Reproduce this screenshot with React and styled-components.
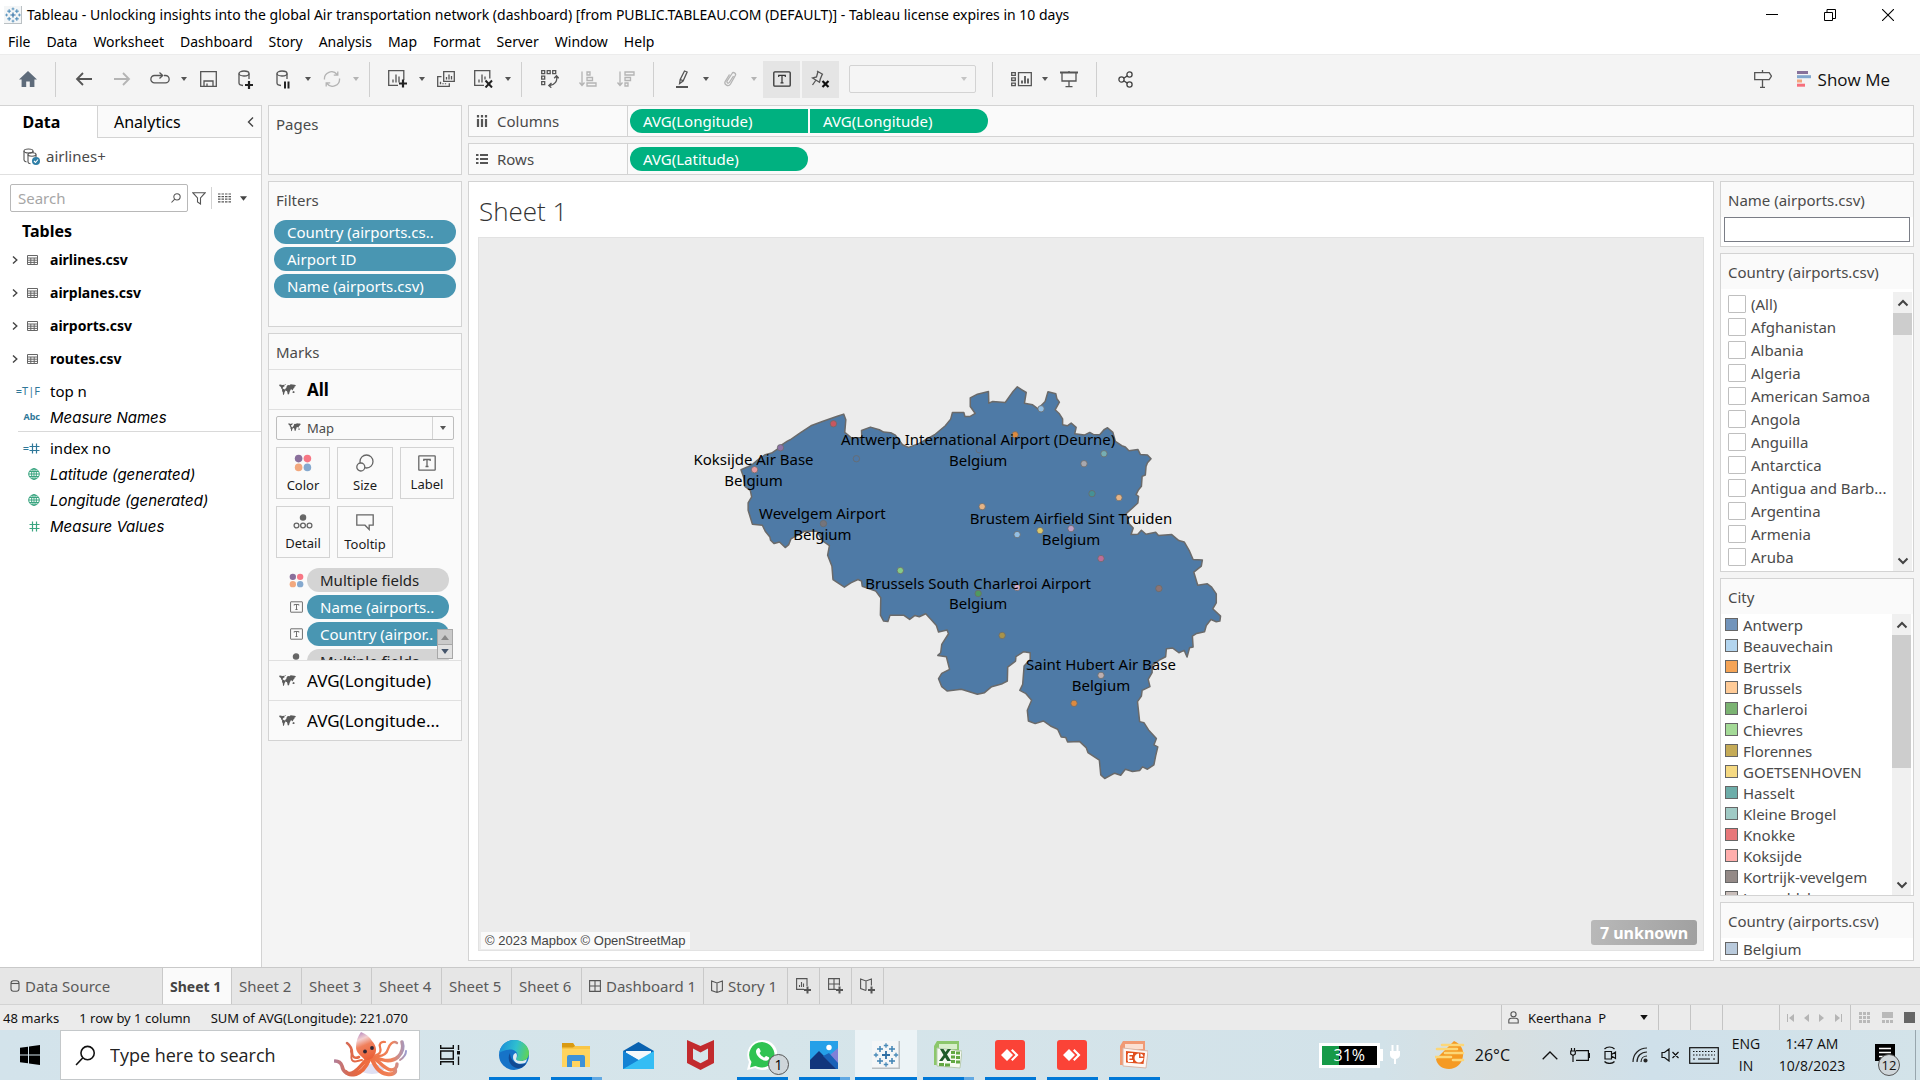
import React from "react";
import styled, { createGlobalStyle, css } from "styled-components";

const ui = `"Noto Sans", "Open Sans", sans-serif`;
const slanted = `Inter, "Noto Sans", sans-serif`;
const line = "#d3d3d3";
const ink = "#4a4a4a";

const Global = createGlobalStyle`
  *, *::before, *::after { box-sizing: border-box; }
  body { margin: 0; font-family: ${ui}; font-size: 14px; color: #000; background: #f4f4f4; }
  button, input, select { font: inherit; color: inherit; margin: 0; }
  button { padding: 0; border: 0; background: none; display: inline-flex; align-items: center; justify-content: center; }
  svg { display: block; flex: none; }
  ul { list-style: none; margin: 0; padding: 0; }
  h1, h2, h3 { margin: 0; font-weight: 400; }
`;

/* ---------- frame ---------- */
const Window = styled.div`
  height: 100vh; display: flex; flex-direction: column; overflow: hidden;
`;
const TitleBar = styled.header`
  height: 30px; flex: none; background: #fff; display: flex; align-items: center; padding: 0 3px 0 4px; line-height: 20px;
`;
const TitleText = styled.span`flex: 1; white-space: nowrap; padding-left: 5px;`;
const WinButton = styled.button`width: 58px; height: 28px;`;
const MenuBar = styled.nav`
  height: 24px; flex: none; background: #fff; display: flex; align-items: center; padding-left: 8px; gap: 16px;
`;
const MenuItem = styled.button`line-height: 20px;`;

/* ---------- toolbar ---------- */
const Toolbar = styled.div`
  height: 51px; flex: none; display: flex; align-items: center; padding: 0 30px 2px 9px; border-top: 1px solid #ececec;
`;
const Tool = styled.button`
  width: 38px; height: 37px; opacity: ${p => (p.$dim ? 0.4 : 1)};
`;
const ToggleTool = styled(Tool)`background: #e5e5e5; width: 37px; margin-right: 2px;`;
const CaretButton = styled.button`width: 10px; height: 37px; opacity: ${p => (p.$dim ? 0.4 : 1)};`;
const Divider = styled.span`width: 1px; height: 35px; margin: 0 9px 0 8px; background: #cfcfcf;`;
const Toggles = styled.div`display: flex; margin: 0 8px 0 4px;`;
const FitBox = styled.div`position: relative; display: flex; margin-right: 8px;`;
const FitSelect = styled.select`
  width: 127px; height: 28px; border: 1px solid ${line}; border-radius: 2px; background: #f5f5f5; appearance: none; opacity: 1;
`;
const OverCaret = styled.span`position: absolute; right: 8px; top: 0; bottom: 0; display: flex; align-items: center; pointer-events: none;`;
const Spacer = styled.span`flex: 1;`;
const ShowMe = styled.button`font-size: 17px; font-family: "Open Sans", sans-serif; gap: 7px; margin-left: 15px; color: #111;`;

/* ---------- body ---------- */
const Body = styled.main`flex: 1; min-height: 0; display: flex;`;
const DataPane = styled.aside`width: 262px; flex: none; background: #fff; border-right: 1px solid ${line};`;
const PaneTabs = styled.div`display: flex; height: 33px;`;
const PaneTab = styled.button`
  font-size: 16px; border-top: 1px solid ${line};
  ${p => p.$on ? css`width: 97px; font-weight: 700; padding-right: 14px;` : css`
    flex: 1; justify-content: flex-start; padding: 0 7px 0 16px; background: #fafafa; border-left: 1px solid ${line}; border-bottom: 1px solid ${line};`}
  span { flex: 1; text-align: left; }
`;
const Source = styled.div`
  height: 37px; display: flex; align-items: center; gap: 6px; padding-left: 23px; color: ${ink}; font-size: 15px; border-bottom: 1px solid #e0e0e0;
`;
const SearchRow = styled.div`display: flex; align-items: center; margin: 9px 0 0 10px; gap: 4px;`;
const SearchBox = styled.label`
  display: flex; align-items: center; width: 178px; height: 28px; border: 1px solid #b8b8b8; border-radius: 2px; padding: 0 6px 0 7px;
  input { border: 0; outline: 0; width: 100%; min-width: 0; padding: 0; background: none; font-size: 15px; }
  input::placeholder { color: #a6a6a6; opacity: 1; }
`;
const ViewTools = styled.div`
  display: flex; align-items: center; gap: 9px; height: 22px; margin-left: 1px; padding-left: 6px; border-left: 1px solid ${line};
`;
const TablesTitle = styled.h2`font-size: 16px; font-weight: 700; line-height: 22px; margin: 8px 0 1px 22px;`;
const TableRow = styled.li`
  display: flex; align-items: center; height: 33px; padding-left: 12px; font-weight: 700; font-size: 14px;
  svg + svg { margin: 0 12px 0 9px; }
`;
const Fields = styled.ul`
  padding: 3px 0 1px 0; margin-left: 18px; border-bottom: ${p => (p.$rule ? "1px solid #d9d9d9" : "0")};
`;
const Field = styled.li`
  display: grid; grid-template-columns: 32px 1fr; align-items: center; height: 26px; font-size: 15px;
  ${p => p.$i && css`font-style: italic; font-family: ${slanted};`}
`;
const TypeMark = styled.span`
  font-family: ${ui}; font-style: normal; font-size: ${p => (p.$s || 11)}px; font-weight: ${p => (p.$b ? 700 : 400)}; color: #2f7799; display: flex; align-items: center; justify-content: flex-end; padding-right: 10px; line-height: 16px; white-space: nowrap;
`;

const Shelves = styled.section`width: 194px; flex: none; margin-left: 6px; display: flex; flex-direction: column; gap: 6px;`;
const Card = styled.section`
  border: 1px solid ${line}; background: #fafafa; height: ${p => (p.$h ? p.$h + "px" : "auto")};
  flex: ${p => (p.$grow ? "1 1 0" : "none")}; min-height: 0; display: flex; flex-direction: column; overflow: hidden;
`;
const CardTitle = styled.h3`
  height: 35px; flex: none; padding: 0 7px; display: flex; align-items: center; color: ${ink}; font-size: 15px;
`;
const PillStack = styled.ul`display: flex; flex-direction: column; gap: 3px; padding: 3px 5px 0;`;
const Pill = styled.button`
  height: 24px; width: ${p => (p.$w ? p.$w + "px" : "100%")}; justify-content: flex-start; padding: 0 13px; font-size: 15px; white-space: nowrap; overflow: hidden; flex: none;
  background: ${p => p.$bg || "#4996b2"}; color: ${p => p.$fg || "#fff"}; border-radius: ${p => p.$r || "12px"};
`;
const SecondPill = styled(Pill)`margin-left: 2px;`;
const MarksRow = styled.button`
  height: 40px; flex: none; width: 100%; justify-content: flex-start; gap: 11px; padding-left: 10px; font-size: 17px; border-top: 1px solid #e0e0e0; font-weight: ${p => (p.$on ? 700 : 400)};
`;
const MarksBody = styled.div`height: 251px; border-top: 1px solid #e0e0e0; padding: 6px 7px 0; position: relative; overflow: hidden;`;
const MarkType = styled.div`
  position: relative; display: flex;
  select { width: 100%; height: 24px; border: 1px solid #bdbdbd; border-radius: 2px; appearance: none; background: #fafafa; padding: 0 0 0 30px; color: ${ink}; font-size: 13px; }
`;
const MarkTypeIcon = styled.span`position: absolute; left: 12px; top: 7px;`;
const MarkTypeCaret = styled.span`
  position: absolute; right: 1px; top: 1px; bottom: 1px; width: 21px; border-left: 1px solid ${line}; display: flex; align-items: center; justify-content: center; pointer-events: none;
`;
const MarkGrid = styled.div`display: grid; grid-template-columns: 54px 56px 54px; gap: 7px; margin-top: 7px;`;
const MarkButton = styled.button`
  height: 52px; border: 1px solid ${line}; flex-direction: column; font-size: 13px; line-height: 18px; gap: 4px; padding-top: 2px; color: #1a1a1a;
`;
const MarkPills = styled.ul`display: flex; flex-direction: column; gap: 3px; padding: 10px 0 0 9px;`;
const MarkPill = styled.li`
  display: grid; grid-template-columns: 22px auto; justify-content: start; align-items: center;
  svg { justify-self: center; }
`;
const Spinner = styled.div`
  position: absolute; right: 8px; bottom: 1px; display: flex; flex-direction: column;
  button { width: 16px; height: 15px; border: 1px solid #a8a8a8; background: #e1e1e1; }
  button:first-child { background: #cacaca; border-bottom: 0; }
`;

const Right = styled.div`flex: 1; min-width: 0; margin: 0 6px 6px 6px; display: flex; flex-direction: column; gap: 6px;`;
const Shelf = styled.div`height: 32px; flex: none; border: 1px solid ${line}; background: #fafafa; display: flex; align-items: center;`;
const ShelfLabel = styled.div`
  width: 159px; height: 100%; display: flex; align-items: center; gap: 9px; padding-left: 7px; border-right: 1px solid ${line}; margin-right: 2px; color: ${ink}; font-size: 15px;
`;
const Work = styled.div`flex: 1; min-height: 0; display: flex; gap: 6px;`;
const View = styled.section`flex: 1; min-width: 0; border: 1px solid ${line}; background: #fff; padding: 0 9px 9px; display: flex; flex-direction: column;`;
const SheetTitle = styled.h1`height: 55px; flex: none; display: flex; align-items: center; font-family: "Open Sans", sans-serif; font-size: 26px; font-weight: 300; color: #333; padding: 2px 0 0 1px;`;
const MapArea = styled.div`flex: 1; min-height: 0; background: #ececec; border: 1px solid #e2e2e2; position: relative; overflow: hidden;
  > svg { width: 100%; height: 100%; }
`;
const Credit = styled.p`
  position: absolute; left: 2px; bottom: 1px; margin: 0; padding: 0 4px; font: 13px/17px "Liberation Sans", Arial, sans-serif; background: rgba(255,255,255,.75); color: #444;
`;
const Unknown = styled.button`
  position: absolute; right: 6px; bottom: 5px; width: 106px; height: 25px; border-radius: 3px; background: linear-gradient(100deg, #b9b9b9, #a0a0a0); color: #fff; font-weight: 700; font-size: 16px;
`;
const Side = styled.aside`width: 194px; flex: none; display: flex; flex-direction: column; gap: 6px;`;
const SideBody = styled.div`background: #fff; flex: 1; min-height: 0; display: flex; overflow: hidden;`;
const NameInput = styled.input`
  width: 100%; margin: 0 3px 4px; height: 25px; border: 1px solid #7a7d86; background: #fff; padding: 0 4px;
`;
const CheckList = styled.ul`flex: 1; min-width: 0; padding: 3px 0 0 7px; color: ${ink};`;
const CheckRow = styled.label`
  display: flex; align-items: center; gap: 5px; height: 23px; font-size: 15px; white-space: nowrap;
  input { appearance: none; width: 18px; height: 18px; border: 1px solid #bfbfbf; border-radius: 1px; background: #fff; flex: none; }
`;
const LegendList = styled.ul`flex: 1; min-width: 0; padding: 0 0 0 4px; color: #4a4a4a;`;
const LegendRow = styled.li`display: flex; align-items: center; gap: 5px; height: 21px; font-size: 15px; white-space: nowrap;`;
const Swatch = styled.span`width: 13px; height: 13px; border: 1px solid #666; background: ${p => p.$c}; flex: none;`;
const Scroll = styled.div`
  width: 19px; flex: none; background: #f0f0f0; display: flex; flex-direction: column; margin: ${p => p.$m || "0"};
  button { height: 21px; width: 100%; flex: none; }
  button:last-child { margin-top: auto; }
`;
const Thumb = styled.span`height: ${p => p.$h}px; background: #cdcdcd;`;

/* ---------- sheet tabs / status ---------- */
const SheetBar = styled.nav`height: 38px; flex: none; display: flex; background: #e6e6e6; border-top: 1px solid #c9c9c9; border-bottom: 1px solid ${line};`;
const SheetTab = styled.button`
  width: ${p => p.$w}px; border-right: 1px solid #c9c9c9; padding: 0 0 0 ${p => (p.$plain ? 0 : 7)}px; gap: 5px; font-size: 15px; color: #5a5a5a; white-space: nowrap;
  justify-content: ${p => (p.$plain ? "center" : "flex-start")};
  ${p => p.$on && css`background: #fafafa; font-weight: 700; color: #444; font-size: 14px;`}
`;
const SourceTab = styled(SheetTab)`padding-left: 10px;`;
const Status = styled.footer`height: 25px; flex: none; background: #ebebeb; display: flex; align-items: center; padding: 0 5px 0 3px; gap: 20px; font-size: 13px; color: #111;`;
const StatusRight = styled.div`margin-left: auto; display: flex; height: 100%;`;
const Slot = styled.div`width: ${p => p.$w}px; border-left: 1px solid #c4c4c4; display: flex; align-items: center; justify-content: space-between; padding: ${p => p.$p || "0"};`;
const UserBox = styled.label`position: relative; display: flex; align-items: center; width: 100%; gap: 9px;
  select { appearance: none; border: 0; background: none; flex: 1; padding: 0; font-size: 13px; }
`;

/* ---------- taskbar ---------- */
const Taskbar = styled.footer`
  height: 50px; flex: none; display: flex; font-family: "Open Sans", sans-serif; background: linear-gradient(90deg, #d3e3eb 0, #d6e5ea 40%, #d2e2e9 72%, #d8dfe0 78%, #cfe0ea 86%, #d3e3e9 100%);
`;
const Start = styled.button`width: 60px;`;
const TaskSearch = styled.label`
  width: 360px; background: #fff; border: 1px solid #c4c8ca; display: flex; align-items: center; padding: 0 11px 0 14px; gap: 14px;
  input { border: 0; outline: 0; background: none; flex: 1; min-width: 0; padding: 0; font-size: 18px; }
  input::placeholder { color: #222; opacity: 1; }
`;
const TaskView = styled.button`width: 63px; padding-right: 3px;`;
const TaskApp = styled.button`
  width: 62px; position: relative; background: ${p => (p.$on ? "#ecf3f6" : "none")};
  &::after { content: ""; position: absolute; bottom: 0; height: 3px; left: ${p => (p.$on ? 0 : 6)}px; right: ${p => (p.$on ? 0 : 5)}px;
    background: ${p => p.$open ? (p.$multi ? "linear-gradient(90deg, #0078d7 80%, #62a9e3 80%)" : "#0078d7") : "transparent"}; }
`;
const Badge = styled.span`
  position: absolute; display: flex; align-items: center; justify-content: center; width: ${p => p.$s}px; height: ${p => p.$s}px; border-radius: 50%; border: 1px solid #555; background: #cfd6da; font-size: ${p => p.$f}px; left: ${p => p.$x}px; top: ${p => p.$y}px;
`;
const Tray = styled.div`margin-left: auto; display: flex; align-items: stretch; font-size: 14px; color: #111;`;
const Battery = styled.div`
  display: flex; align-items: center; gap: 6px;
  > span { width: 61px; height: 25px; border: 3px solid #fff; background: linear-gradient(90deg, #169a48 30%, #000 30%) padding-box; color: #fff; font-size: 16px; line-height: 19px; text-align: center; }
  > i { width: 3px; height: 12px; background: #fff; margin-left: -6px; }
`;
const Weather = styled.button`font-size: 16px; gap: 10px; margin: 0 25px 0 34px;`;
const TrayCell = styled.button`width: ${p => p.$w || 30}px; position: relative; line-height: 22px; text-align: center;`;
const DesktopEdge = styled.span`width: 5px; border-left: 1px solid #98a6ad;`;

/* ---------- icons ---------- */
const Ico = ({ w = 20, h = w, vb, children, s = "#555", sw = 1.3 }) => (
  <svg width={w} height={h} viewBox={vb || `0 0 ${w} ${h}`} fill="none" stroke={s} strokeWidth={sw} aria-hidden="true">{children}</svg>
);
const Down = ({ c = "#555", w = 6, h = 4 }) => (
  <svg width={w} height={h} viewBox="0 0 6 4" aria-hidden="true"><path d="M0 0h6L3 4z" fill={c} /></svg>
);
const plus = (x, y, r, c, w) => <path key={`${x}-${y}`} d={`M${x - r} ${y}H${x + r}M${x} ${y - r}V${y + r}`} stroke={c} strokeWidth={w} />;
const TableauMark = ({ size }) => (
  <svg width={size} height={size} viewBox="0 0 28 28" aria-hidden="true">
    <rect width="28" height="28" fill="#b9bfc2" /><rect width="26.5" height="26.5" fill="#f4f6f7" />
    {plus(14, 14, 4, "#2f6ea3", 1.8)}
    {[[8, 8], [20, 8], [8, 20], [20, 20]].map(([x, y]) => plus(x, y, 3, "#3f83b4", 1.5))}
    {[[14, 4.5], [14, 23.5], [4, 14], [24, 14]].map(([x, y]) => plus(x, y, 2.2, "#4a8ab8", 1.3))}
  </svg>
);
const World = ({ w = 17 }) => (
  <svg width={w} height={Math.round(w * 0.72)} viewBox="0 0 17 12" aria-hidden="true" fill="#5a5a5a">
    <path d="M0 .8L2.200.5l.6.700L4.200.8l1.500.5-.3 1.300-.9.200-.9 1.200.3.700 1.200.3 1.200.9.100 1.200-.8 1-.3 1.400-.7 1.500-.6-.2-.2-2.600-.8-1.300.2-1.300-.9-1-.4-1.700L.5 2.100z" />
    <path d="M7.600 2.500l.6-1.100L9.300.9l1.100.3L11.700.3l1.800.3 2 .1 1.400.6-.5 1-.8.300-.3 1.300-.9.500-.3 1.100-.6.900-.7-1.100-.8.500-.9 0 .300.700-.9 1.500-.1 1.300-.9 1.200-.8-.2-.4-2.300-.5-1.100-1.200-.1-.6-1.100.5-1.200.8-.6zM13.600 7.700l1-.6.8.4.300 1.100-1 .5-1.200-.3zM5.600.2l1.100-.1-.2.8-.7.200z" />
  </svg>
);
const FourDots = ({ size = 18 }) => (
  <svg width={size} height={size} viewBox="0 0 18 18" aria-hidden="true">
    <circle cx="4.6" cy="4.6" r="3.8" fill="#8a6f9b" /><circle cx="13.4" cy="4.6" r="3.8" fill="#f77785" />
    <circle cx="4.6" cy="13.4" r="3.8" fill="#f2a87e" /><circle cx="13.4" cy="13.4" r="3.8" fill="#85a9cf" />
  </svg>
);
const TBox = ({ w = 18, h = 16, c = "#666" }) => (
  <Ico w={w} h={h} vb="0 0 18 16" s={c}><rect x=".8" y=".8" width="16.4" height="14.4" rx=".5" /><path d="M5.800 6V4.500h6.400V6M9 4.500V11.500M7.500 11.500h3" /></Ico>
);
const DetailIco = () => (
  <Ico w={20} h={16} s="#666"><circle cx="10" cy="3.500" r="2.600" fill="#666" /><circle cx="3.500" cy="11.500" r="2.400" /><circle cx="10" cy="11.500" r="2.400" /><circle cx="16.500" cy="11.500" r="2.400" /></Ico>
);
const MiniTable = () => (
  <Ico w={11} h={10} s="#666" sw="1"><path d="M.5.5h10v9H.5zM.5 3h10M.5 5.200h10M.5 7.400h10M3.800 3v6.500M7.200 3v6.500" /></Ico>
);
const Chev = ({ d, w = 8, h = 8, sw = 1.4 }) => <Ico w={w} h={h} s="#444" sw={sw}><path d={d} /></Ico>;
const Globe = () => (
  <Ico w={12} s="#3aa580" sw="1"><circle cx="6" cy="6" r="5.300" /><ellipse cx="6" cy="6" rx="2.400" ry="5.300" /><path d="M.7 6h10.600M6 .7v10.600M1.300 3.500h9.400M1.300 8.500h9.400" /></Ico>
);
const Hash = ({ c }) => <Ico w={11} s={c} sw="1.200"><path d="M3.500.5v10M7.500.5v10M.5 3.500h10M.5 7.500h10" /></Ico>;
const MagGlass = ({ size = 12, c = "#555", sw = 1.3 }) => (
  <Ico w={size} vb="0 0 12 12" s={c} sw={sw}><circle cx="7.200" cy="4.600" r="3.800" /><path d="M4.500 7.300L.6 11.400" /></Ico>
);
const Up = () => <Chev w={12} h={8} sw={2} d="M1.500 6.500L6 2l4.500 4.500" />;
const Dn = () => <Chev w={12} h={8} sw={2} d="M1.500 1.500L6 6l4.500-4.500" />;

const icons = {
  home: <svg width="18" height="16" viewBox="0 0 18 16"><path d="M9 0l9 8.500h-2.600V16h-4.600v-5.500H7.200V16H2.600V8.500H0z" fill="#5e6b7a" /></svg>,
  back: <Ico w={18} h={14} sw="1.800"><path d="M17 7H2M8 1L2 7l6 6" /></Ico>,
  fwd: <Ico w={18} h={14} sw="1.800"><path d="M1 7h15M10 1l6 6-6 6" /></Ico>,
  replay: <Ico w={20} h={14}><path d="M14 3.500h1.500a3.600 3.600 0 010 7.300h-11a3.600 3.600 0 010-7.300H12M9.500.5l3.200 3-3.200 3" /></Ico>,
  save: <Ico w={17} h={16}><path d="M.7.7h15.600v14.600H.7zM4 15v-5h9v5M7 15v-2.500" /></Ico>,
  dbAdd: <Ico w={18} h={19}><ellipse cx="7" cy="3.500" rx="5" ry="2.500" /><path d="M2 3.500V13c0 1.300 1.800 2.300 4 2.500M12 3.500V9" /><path d="M12 11v8M8 15h8" stroke="#222" strokeWidth="2.200" /></Ico>,
  dbPause: <Ico w={18} h={19}><ellipse cx="7" cy="3.500" rx="5" ry="2.500" /><path d="M2 3.500V13c0 1.300 1.800 2.300 4 2.500M12 3.500V9" /><path d="M10 11.500v7M13.500 11.500v7" stroke="#222" strokeWidth="2" /></Ico>,
  refresh: <Ico w={18} h={16}><path d="M1.500 8.500A7 7 0 0114 3.500M14.800.5v3.600h-4M16.500 7.500A7 7 0 014 12.500M3.200 15.500v-3.600h4" /></Ico>,
  newSheet: <Ico w={20} h={18}><path d="M15.800 10V.7H.7v14.600H10M5 12.500v-3M8 12.500v-8M11 12.500V6.500" /><path d="M15 9.500v8M11 13.500h8" stroke="#222" strokeWidth="2.200" /></Ico>,
  dup: <Ico w={18} h={16}><path d="M6.700.7h10.600v9.600H6.700zM4.500 5.700H.7v9.600h11.600v-3M9.500 8.500V6M12 8.500V3.500M14.500 8.500V5M3.500 13.200v-2.500M6 13.200v-1M8.500 13.200v-1" /></Ico>,
  clear: <Ico w={20} h={18}><path d="M15.800 8.500V.7H.7v14.600H10M5 12.500v-3M8 12.500v-8M11 9.500V6.500" /><path d="M11.500 10.500l6.500 7M18 10.500l-6.500 7" stroke="#222" strokeWidth="2" /></Ico>,
  swap: <Ico w={18} h={18}><path d="M.7.7h3v3h-3zM6.200.7h3v3h-3zM11.700.7h3v3h-3zM.7 6.200h3v3h-3zM.7 11.700h3v3h-3zM15.500 6.500c1.200 4-1.500 8.500-7 9M13.200 8.200l2.300-2.500 2.200 2.500M10.500 13l-2.700 2.500 2.500 2.200" /></Ico>,
  asc: <Ico w={18} h={16}><path d="M3 .5v14M.5 11.500L3 14.500l2.500-3M8 1h3v3H8zM8 6.500h5.500v3H8zM8 12h9v3H8z" /></Ico>,
  desc: <Ico w={18} h={16}><path d="M3 .5v14M.5 11.500L3 14.500l2.500-3M8 1h9v3H8zM8 6.500h5.500v3H8zM8 12h3v3H8z" /></Ico>,
  pen: <Ico w={14} h={18}><path d="M9.500 1l2.600 1-4 9-3.500 2.600.6-4.200zM5.300 9.500l2.600 1.200" /><path d="M1 17h12" strokeWidth="2" /></Ico>,
  clip: <Ico w={14} h={16}><path d="M10.500 5l-4.200 6.500c-1 1.500-3 0-2.200-1.500L9 2.500c1.200-2 4.500-.3 3.300 2L7.500 13c-2 3.200-7 .8-5.200-2.800L6.500 3.500" /></Ico>,
  text: <Ico w={18} h={16} s="#333"><rect x=".8" y=".8" width="16.400" height="14.400" rx="1" /><path d="M5.700 6V4.300h6.600V6M9 4.300v7.500M7.500 11.800h3" strokeWidth="1.200" /></Ico>,
  pin: <Ico w={20} h={18}><path d="M6 1l6 3.500M7 1.500L5.500 7 1.500 8l7 4.200.8-3.200 2-4.800M5 10l-3.500 5" /><path d="M11.500 11l6 6M17.500 11l-6 6" stroke="#111" strokeWidth="2.200" /></Ico>,
  cards: <Ico w={21} h={15}><path d="M7.500.7h12.800v13H7.500zM.7.700h3.600v2.600H.7zM.7 5.900h3.600v2.600H.7zM.7 11.100h3.600v2.600H.7z" /><path d="M11 11.500V8.500M14 11.500V4M17 11.500v-5" strokeWidth="1.800" /></Ico>,
  present: <Ico w={18} h={17}><path d="M0 1.500h18" strokeWidth="2" /><path d="M2 2v8h14V2M9 10v5M5.500 15.700h7M9 0v1" /></Ico>,
  share: <Ico w={15} h={17} s="#444"><circle cx="3.500" cy="8.500" r="2.600" /><circle cx="11.500" cy="3.500" r="2.600" /><circle cx="11.500" cy="13.500" r="2.600" /><path d="M5.700 7.200l3.600-2.300M5.700 9.800l3.600 2.300" /></Ico>,
  sign: <Ico w={18} h={18}><path d="M.7 2.700h14.500l2.300 3.500-2.300 3.500H.7zM8.500 0v2.700M8.500 9.700v7.500M6 17.300h5" /></Ico>,
  me: <svg width="14" height="16" viewBox="0 0 14 16"><path d="M0 0h11v3H0z" fill="#87719a" /><path d="M0 4.200h14v3H0z" fill="#82a7ce" /><path d="M0 8.500h5v3H0z" fill="#f4a57d" /><path d="M0 12.700h8v3H0z" fill="#f66f7c" /></svg>,
};

/* ---------- data ---------- */
const outline = "M172 300L190 292 205 283 222 268 240 255 258 250 272 240 283 228 302 214 310 210 338 189 368 168 400 155 440 140 460 133 466 150 463 188 480 203 511 204 510 182 535 172 560 180 572 187 592 189 605 196 625 225 642 233 672 221 690 210 715 195 745 168 760 148 765 128 797 128 800 140 815 140 829 131 815 110 815 84 835 73 866 65 867 100 878 95 913 98 935 65 947 51 960 60 972 68 967 100 990 105 1005 117 1025 95 1033 66 1055 72 1058 87 1065 97 1053 120 1065 132 1074 147 1074 165 1087 168 1098 160 1112 173 1108 192 1135 196 1150 188 1160 194 1178 195 1190 180 1200 174 1215 188 1222 215 1240 228 1250 232 1260 243 1285 239 1292 254 1312 256 1322 267 1312 279 1308 290 1306 316 1297 320 1295 350 1286 362 1280 375 1287 380 1285 400 1270 415 1252 432 1260 462 1272 475 1266 495 1285 494 1295 482 1308 494 1335 488 1343 498 1380 495 1400 513 1415 517 1430 545 1440 570 1466 571 1463 590 1442 608 1453 647 1480 643 1492 653 1505 673 1505 700 1495 718 1517 740 1515 755 1505 757 1490 750 1477 768 1472 787 1450 792 1438 800 1440 833 1430 835 1423 863 1415 843 1400 850 1383 836 1365 838 1363 862 1345 872 1325 888 1325 910 1314 930 1319 952 1297 963 1295 980 1284 997 1290 1057 1302 1060 1315 1082 1337 1108 1330 1127 1341 1133 1335 1160 1330 1187 1312 1200 1298 1193 1290 1204 1270 1207 1250 1200 1237 1218 1220 1212 1192 1228 1181 1217 1177 1173 1145 1150 1140 1135 1122 1117 1088 1118 1083 1105 1070 1103 1060 1080 1040 1070 1020 1055 997 1063 978 1055 975 1023 987 993 970 972 954 963 962 945 966 890 983 870 983 850 965 847 943 862 942 875 920 893 919 935 905 943 875 952 855 970 835 975 790 960 750 965 735 952 726 928 735 912 757 900 748 862 724 858 732 850 735 825 754 793 750 782 726 788 720 768 705 750 690 733 672 742 660 738 645 750 628 737 590 737 584 756 572 755 563 737 564 685 550 665 512 650 510 635 500 630 480 640 462 653 430 630 427 590 415 557 420 528 402 515 385 485 350 485 312 508 306 525 296 534 280 517 265 522 255 512 253 502 240 485 232 467 204 464 192 422 192 400 202 382 198 362 183 350 180 325z";
const labels = [
  ["Antwerp International Airport (Deurne)", 299, 75], ["Koksijde Air Base", 74, 95], ["Wevelgem Airport", 143, 149],
  ["Brustem Airfield Sint Truiden", 392, 154], ["Brussels South Charleroi Airport", 299, 219], ["Saint Hubert Air Base", 422, 301],
];
const dots = [
  [154, 54, "#c9565f"], [101, 78, "#8d72a6"], [75, 100, "#e79aa0"], [177, 89, "#4e79a7"], [300, 80, "#4e79a7"], [336, 65, "#dd8a3f"], [362, 39, "#93bfe4"],
  [425, 84, "#76aeb3"], [405, 94, "#a8a8ae"], [413, 124, "#459196"], [440, 128, "#e6b486"], [303, 137, "#e6b486"], [144, 154, "#74747b"],
  [338, 165, "#93bfe4"], [361, 161, "#d9c66d"], [392, 159, "#bb9fc4"], [422, 189, "#bd6d97"], [221, 201, "#86cb86"], [338, 218, "#d9b3cf"],
  [299, 224, "#4f9a5f"], [480, 219, "#8d7473"], [323, 266, "#a8934a"], [422, 306, "#bdafb0"], [395, 334, "#dd8a3f"],
];
const countries = ["(All)", "Afghanistan", "Albania", "Algeria", "American Samoa", "Angola", "Anguilla", "Antarctica", "Antigua and Barb...", "Argentina", "Armenia", "Aruba", "Australia"];
const cities = [["Antwerp", "#7294bb"], ["Beauvechain", "#b3d5ef"], ["Bertrix", "#f5a456"], ["Brussels", "#ffcb97"], ["Charleroi", "#7bb372"], ["Chievres", "#a4da97"], ["Florennes", "#c5ab57"], ["GOETSENHOVEN", "#f5d982"], ["Hasselt", "#6dada9"], ["Kleine Brogel", "#a0cac5"], ["Knokke", "#e77779"], ["Koksijde", "#ffaeac"], ["Kortrijk-vevelgem", "#948a87"], ["Leopoldsburg", "#c8bdb9"]];

const Octopus = () => (
  <svg width="74" height="46" viewBox="0 0 74 46" aria-hidden="true">
    <defs>
      <linearGradient id="oct" x1=".2" y1="0" x2=".5" y2="1"><stop offset="0" stopColor="#b98cc0" /><stop offset=".25" stopColor="#f3cfd0" /><stop offset=".5" stopColor="#f0805c" /><stop offset="1" stopColor="#ea6038" /></linearGradient>
      <linearGradient id="arm" gradientUnits="userSpaceOnUse" x1="0" y1="0" x2="74" y2="0"><stop offset="0" stopColor="#b0809c" /><stop offset=".2" stopColor="#d9694f" /><stop offset=".4" stopColor="#ee6a3c" /><stop offset=".78" stopColor="#f0835a" /><stop offset="1" stopColor="#8f9fdc" /></linearGradient>
    </defs>
    <ellipse cx="38" cy="37" rx="12" ry="5" fill="#dfe0f3" />
    <g fill="none" stroke="url(#arm)" strokeLinecap="round">
      <path d="M25 25c-4 2-7 0-7-4s-1-7-5-10" strokeWidth="2.600" />
      <path d="M28 28c-5 1-8 3-10 0s1-5-1-9" strokeWidth="2" />
      <path d="M33 27c-5 5-8 10-13 13C14 44 9 40 8 34c-1-3-4-5-7-5" strokeWidth="3.600" />
      <path d="M35 28c-3 7-7 12-13 14-4 1-8 1-10-2" strokeWidth="4" />
      <path d="M38 27c3 8 8 14 15 15 5 1 9-1 8-4" strokeWidth="4" />
      <path d="M40 26c6 4 10 11 17 12 4 0 6-3 6-6" strokeWidth="3.400" />
      <path d="M41 25c8 4 17 5 23 0 4-4 6-9 4-15" strokeWidth="3.600" />
      <path d="M42 23c5-1 5-5 4-8s1-6 5-5" strokeWidth="2.200" />
      <path d="M44 24c7 0 9-3 10-7s5-9 9-6" strokeWidth="2.400" />
      <path d="M66 28c3-2 6-5 6-9" strokeWidth="2" />
    </g>
    <path d="M27 0c5 2 9 5 11 9 5 5 5 11 2 15-2 4-9 6-12 1-3-3-6-5-6-10 0-6 2-11 5-15z" fill="url(#oct)" />
    <circle cx="31" cy="19.500" r="1.900" fill="#2f2634" /><circle cx="38" cy="16" r="1.900" fill="#2f2634" />
  </svg>
);
const EdgeLogo = () => (
  <svg width="30" height="30" viewBox="0 0 30 30" aria-hidden="true">
    <defs><linearGradient id="eg" x1="0" y1=".3" x2="1" y2="0.500"><stop offset="0" stopColor="#1b8fd8" /><stop offset=".55" stopColor="#2fbfd0" /><stop offset="1" stopColor="#5fd35a" /></linearGradient></defs>
    <circle cx="15" cy="15" r="15" fill="#1673c8" />
    <path d="M.3 13C1.500 5 7.500 0 15 0c9 0 15 6.500 15 13 0 5-3.500 8-8 8-3 0-5-1-5-2 0-1 1.500-1.500 1.500-4 0-3-3-5.500-7-5.500C6 9.500 1.500 12 .3 13z" fill="url(#eg)" />
    <path d="M11 13c-3 5-1 13 7 15 4 1 8-2 9.500-5-3 1.500-7 2-10.500 0-4-2-6-6-6-10z" fill="#114a94" />
    <path d="M17 19c0 1 2 2 5 2 2 0 4-.5 6-2-.5 2-1 3-2 4-7 2.500-12-1-12-6 0-3 2-4 3-4 1 1 1.500 3 0 6z" fill="#dfeaf0" />
  </svg>
);
const AnyDesk = () => <svg width="30" height="30" viewBox="0 0 30 30"><rect width="30" height="30" rx="3" fill="#fb4337" /><path d="M12 9l6 6-6 6-6-6zM16 10.500L17.500 9l6 6-6 6-1.500-1.500 4.500-4.500z" fill="#fff" /></svg>;
const apps = [
  { n: "Edge", open: 1, i: <EdgeLogo /> },
  { n: "File Explorer", open: 1, multi: 1, i: <svg width="28" height="24" viewBox="0 0 28 24"><path d="M0 0h11l2 3h15v21H0z" fill="#f9c646" /><path d="M0 0h11l2 3-2 1.500H0z" fill="#d99a12" /><path d="M0 6h28v18H0z" fill="#ffd45e" /><path d="M5 24V14a2 2 0 012-2h14a2 2 0 012 2v10h-5v-6h-8v6z" fill="#3d92d8" /></svg> },
  { n: "Mail", i: <svg width="31" height="27" viewBox="0 0 31 27"><path d="M0 9L15.500 0 31 9v18H0z" fill="#0a62b0" /><path d="M3 9h25v10H3z" fill="#f3f8fb" /><path d="M0 9l31 18H0z" fill="#1d9ce8" /><path d="M31 9L0 27h31z" fill="#35bdf4" /><path d="M0 9l15.500 9L0 27z" fill="#1583d4" /></svg> },
  { n: "McAfee", i: <svg width="27" height="30" viewBox="0 0 27 30"><path d="M0 0l13.500 6L27 0v23l-13.500 7L0 23zM6 8.500v10.800l7.500 3.900 7.500-3.900V8.500l-7.500 4z" fill="#c22b2e" fillRule="evenodd" /></svg> },
  { n: "WhatsApp", open: 1, badge: 1, i: <svg width="30" height="30" viewBox="0 0 30 30"><path d="M15 0a15 15 0 11-7 28L0 30l2-8A15 15 0 0115 0z" fill="#fff" /><path d="M15 2a12.800 12.800 0 11-6.500 24L3 27.500 4.500 22A12.800 12.800 0 0115 2z" fill="#2fc351" /><path d="M10.500 8.500c1-1 2-.5 2.500 1l.7 1.800c0 .8-1.200 1.400-1 2 .9 2 2.500 3.300 4.500 4.100.7 0 1.200-1.500 2-1.500l2.600 1.300c1 .7-.2 3.300-2.700 3.500-5 .3-10.500-5.500-10.100-9.500 0-1 .8-2 1.500-2.700z" fill="#fff" /></svg> },
  { n: "Photos", open: 1, multi: 1, i: <svg width="28" height="28" viewBox="0 0 28 28"><path d="M0 0h28v28H0z" fill="#25a0e8" /><path d="M20 14l8-7v21H14z" fill="#7f80d8" /><path d="M0 19L9 10l18 18H0z" fill="#12367c" /><path d="M13 15l6-3 9 10v6h-2z" fill="#1a62b8" /><circle cx="19" cy="6.500" r="2.700" fill="#fff" /></svg> },
  { n: "Tableau", open: 1, on: 1, i: <TableauMark size={28} /> },
  { n: "Excel", open: 1, multi: 1, i: <svg width="28" height="28" viewBox="0 0 28 28"><path d="M3 0h22v10L8 24H0V5z" fill="#8cc76b" /><path d="M5 3h18v5H5z" fill="#d8efcb" /><path d="M3 7l25 3-2 17-23-2z" fill="#f6faf3" stroke="#b8cbb0" /><path d="M17 10h4v3h-4zM22 10.500h4v3h-4zM17 14.500h4v3h-4zM22 15h4v3h-4zM17 19h4v3h-4zM22 19.500h4v3h-4zM5 22h5v3H5zM11 22.500h5v3h-5z" fill="#62a843" /><path d="M6 8h3.500l2 3 2.200-3H17l-4 5.500L17 20h-3.700l-2.200-3.500L8.500 20H5l4.500-6z" fill="#1f5c2a" /></svg> },
  { n: "AnyDesk", open: 1, i: <AnyDesk /> },
  { n: "AnyDesk session", open: 1, i: <AnyDesk /> },
  { n: "PowerPoint", open: 1, i: <svg width="28" height="28" viewBox="0 0 28 28"><path d="M3 0h22v10L8 24H0V5z" fill="#f19a74" /><path d="M5 3h18v5H5z" fill="#fbe0d2" /><path d="M3 7l25 3-2 17-23-2z" fill="#fdf7f4" stroke="#d9b8aa" /><path d="M6 10l19 2-1.500 11L6 21.500z" fill="#e0501f" /><path d="M8 13h5M8 16.500h4M8 20h5M8.500 13v7" stroke="#fff" strokeWidth="1.800" /><path d="M19 12.500v4.500h4.500a4.500 4.500 0 11-4.500-4.500zM20.500 12.500a4 4 0 013 3h-3z" fill="#fff" /></svg> },
];

const LegendItems = ({ items }) => (
  <LegendList>{items.map(([n, c]) => <LegendRow key={n}><Swatch $c={c} />{n}</LegendRow>)}</LegendList>
);
const T = ({ n, dim }) => <Tool aria-label={n} $dim={dim}>{icons[n]}</Tool>;
const C = ({ dim }) => <CaretButton aria-label="More options" $dim={dim}><Down /></CaretButton>;

export default function App() {
  return (
    <Window>
      <Global />
      <TitleBar>
        <TableauMark size={18} />
        <TitleText>Tableau - Unlocking insights into the global Air transportation network (dashboard) [from PUBLIC.TABLEAU.COM (DEFAULT)] - Tableau license expires in 10 days</TitleText>
        <WinButton aria-label="Minimize"><Ico w={12} s="#000" sw="1"><path d="M0 5.500h12" /></Ico></WinButton>
        <WinButton aria-label="Restore"><Ico w={12} s="#000" sw="1"><path d="M.5 3.500h8v8h-8zM3 3.500V.5h8.500v9H8.500" /></Ico></WinButton>
        <WinButton aria-label="Close"><Ico w={12} s="#000" sw="1.100"><path d="M0 0l12 12M12 0L0 12" /></Ico></WinButton>
      </TitleBar>
      <MenuBar>
        {["File", "Data", "Worksheet", "Dashboard", "Story", "Analysis", "Map", "Format", "Server", "Window", "Help"].map(m => <MenuItem key={m}>{m}</MenuItem>)}
      </MenuBar>

      <Toolbar>
        <T n="home" /><Divider />
        <T n="back" /><T n="fwd" dim /><T n="replay" /><C /><T n="save" /><T n="dbAdd" /><T n="dbPause" /><C /><T n="refresh" dim /><C dim /><Divider />
        <T n="newSheet" /><C /><T n="dup" /><T n="clear" /><C /><Divider />
        <T n="swap" /><T n="asc" dim /><T n="desc" dim /><Divider />
        <T n="pen" /><C /><T n="clip" dim /><C dim />
        <Toggles>
          <ToggleTool aria-label="Show mark labels">{icons.text}</ToggleTool>
          <ToggleTool aria-label="Fix axes">{icons.pin}</ToggleTool>
        </Toggles>
        <FitBox><FitSelect aria-label="Fit" disabled /><OverCaret><Down c="#c4c4c4" w={8} /></OverCaret></FitBox>
        <Divider /><T n="cards" /><C /><T n="present" /><Divider /><T n="share" />
        <Spacer /><T n="sign" />
        <ShowMe>{icons.me}Show Me</ShowMe>
      </Toolbar>

      <Body>
        <DataPane>
          <PaneTabs>
            <PaneTab $on>Data</PaneTab>
            <PaneTab><span>Analytics</span><Chev w={7} h={10} d="M6 .5L1.500 5 6 9.500" /></PaneTab>
          </PaneTabs>
          <Source>
            <Ico w={17} h={17} sw="1.100"><ellipse cx="5.500" cy="3" rx="4.500" ry="2" /><path d="M1 3v9c0 1 1 1.500 2.500 2M10 3v2" /><ellipse cx="9" cy="6.500" rx="4" ry="1.700" /><path d="M5 6.500V14c0 .8 1 1.500 2.500 1.700M13 6.500V9" /><circle cx="13" cy="13" r="4" fill="#2e7ea6" stroke="none" /><path d="M11 13l1.500 1.500 2.500-3" stroke="#fff" /></Ico>
            airlines+
          </Source>
          <SearchRow>
            <SearchBox><input type="text" placeholder="Search" aria-label="Search fields" /><MagGlass size={10} /></SearchBox>
            <Ico w={14} h={13} sw="1.100"><path d="M.8.700h12.400L8.500 6v6L5.500 10V6z" /></Ico>
            <ViewTools>
              <Ico w={13} h={10} sw="1.200"><path strokeDasharray="2.500 1" d="M0 1h13M0 3.600h13M0 6.200h13M0 8.800h13" /></Ico>
              <Down w={7} h={5} c="#444" />
            </ViewTools>
          </SearchRow>
          <TablesTitle>Tables</TablesTitle>
          <ul>
            {["airlines.csv", "airplanes.csv", "airports.csv", "routes.csv"].map(t => (
              <TableRow key={t}><Chev w={6} h={8} d="M1 .5L4.800 4 1 7.500" /><MiniTable />{t}</TableRow>
            ))}
          </ul>
          <Fields $rule>
            <Field><TypeMark>=T|F</TypeMark>top n</Field>
            <Field $i><TypeMark $b $s={9}>Abc</TypeMark>Measure Names</Field>
          </Fields>
          <Fields>
            <Field><TypeMark>=<Hash c="#2f7799" /></TypeMark>index no</Field>
            <Field $i><TypeMark><Globe /></TypeMark>Latitude (generated)</Field>
            <Field $i><TypeMark><Globe /></TypeMark>Longitude (generated)</Field>
            <Field $i><TypeMark><Hash c="#3aa580" /></TypeMark>Measure Values</Field>
          </Fields>
        </DataPane>

        <Shelves>
          <Card $h={70}><CardTitle>Pages</CardTitle></Card>
          <Card $h={146}>
            <CardTitle>Filters</CardTitle>
            <PillStack>
              {["Country (airports.cs..", "Airport ID", "Name (airports.csv)"].map(p => <li key={p}><Pill>{p}</Pill></li>)}
            </PillStack>
          </Card>
          <Card>
            <CardTitle>Marks</CardTitle>
            <MarksRow $on><World />All</MarksRow>
            <MarksBody>
              <MarkType>
                <select aria-label="Mark type"><option>Map</option></select>
                <MarkTypeIcon><World w={13} /></MarkTypeIcon>
                <MarkTypeCaret><Down /></MarkTypeCaret>
              </MarkType>
              <MarkGrid>
                <MarkButton><FourDots />Color</MarkButton>
                <MarkButton><Ico w={18} s="#666"><circle cx="10.500" cy="7.500" r="6.500" /><circle cx="4.800" cy="13" r="4" fill="#fafafa" /></Ico>Size</MarkButton>
                <MarkButton><TBox />Label</MarkButton>
                <MarkButton><DetailIco />Detail</MarkButton>
                <MarkButton><Ico w={18} h={17} s="#666"><path d="M.8.800h16.400v10.400h-4V15.500L9 11.200H.8z" /></Ico>Tooltip</MarkButton>
              </MarkGrid>
              <MarkPills>
                <MarkPill><FourDots size={15} /><Pill $w={142} $bg="#d4d4d4" $fg="#222">Multiple fields</Pill></MarkPill>
                <MarkPill><TBox w={13} h={12} /><Pill $w={142}>Name (airports..</Pill></MarkPill>
                <MarkPill><TBox w={13} h={12} /><Pill $w={142}>Country (airpor..</Pill></MarkPill>
                <MarkPill><DetailIco /><Pill $w={142} $bg="#d4d4d4" $fg="#222">Multiple fields</Pill></MarkPill>
              </MarkPills>
              <Spinner>
                <button aria-label="Scroll up"><svg width="8" height="5" viewBox="0 0 8 5"><path d="M0 5h8L4 0z" fill="#888" /></svg></button>
                <button aria-label="Scroll down"><Down w={8} h={5} c="#45556b" /></button>
              </Spinner>
            </MarksBody>
            <MarksRow><World />AVG(Longitude)</MarksRow>
            <MarksRow><World />AVG(Longitude...</MarksRow>
          </Card>
        </Shelves>

        <Right>
          <Shelf>
            <ShelfLabel><Ico w={12} h={12} sw="2.200"><path d="M2 0v2.500M2 4v8M6 0v2.500M6 4v8M10 0v2.500M10 4v8" /></Ico>Columns</ShelfLabel>
            <Pill $w={178} $bg="#00b180" $r="12px 0 0 12px">AVG(Longitude)</Pill>
            <SecondPill $w={178} $bg="#00b180" $r="0 12px 12px 0">AVG(Longitude)</SecondPill>
          </Shelf>
          <Shelf>
            <ShelfLabel><Ico w={12} h={12} sw="2"><path d="M0 2h2.500M4 2h8M0 6h2.500M4 6h8M0 10h2.500M4 10h8" /></Ico>Rows</ShelfLabel>
            <Pill $w={178} $bg="#00b180">AVG(Latitude)</Pill>
          </Shelf>
          <Work>
            <View>
              <SheetTitle>Sheet 1</SheetTitle>
              <MapArea>
                <svg viewBox="0 0 1226 713" role="img" aria-label="Map of Belgium with airports">
                  <g transform="translate(201 132)">
                    <path d={outline} transform="scale(.35714 .33333)" fill="#4e7aa6" stroke="#6a6a6a" strokeWidth="1.500" vectorEffect="non-scaling-stroke" strokeLinejoin="round" />
                    {dots.map(([x, y, c]) => <circle key={x + "-" + y} cx={x} cy={y} r="3.200" fill={c} stroke="#6b6b6b" strokeWidth=".8" />)}
                    <g fontSize="15" fontFamily={ui} textAnchor="middle" fill="#000">
                      {labels.map(([t, x, y]) => <text key={t} x={x} y={y}>{t}<tspan x={x} dy="21">Belgium</tspan></text>)}
                    </g>
                  </g>
                </svg>
                <Credit>© 2023 Mapbox © OpenStreetMap</Credit>
                <Unknown>7 unknown</Unknown>
              </MapArea>
            </View>
            <Side>
              <Card $h={66}>
                <CardTitle as="label" htmlFor="name">Name (airports.csv)</CardTitle>
                <SideBody><NameInput id="name" type="text" /></SideBody>
              </Card>
              <Card $h={319}>
                <CardTitle>Country (airports.csv)</CardTitle>
                <SideBody>
                  <CheckList>{countries.map(c => <li key={c}><CheckRow><input type="checkbox" />{c}</CheckRow></li>)}</CheckList>
                  <Scroll $m="3px 1px 0 0"><button aria-label="Scroll up"><Up /></button><Thumb $h={22} /><button aria-label="Scroll down"><Dn /></button></Scroll>
                </SideBody>
              </Card>
              <Card $grow>
                <CardTitle>City</CardTitle>
                <SideBody>
                  <LegendItems items={cities} />
                  <Scroll $m="0 2px 0 0"><button aria-label="Scroll up"><Up /></button><Thumb $h={133} /><button aria-label="Scroll down"><Dn /></button></Scroll>
                </SideBody>
              </Card>
              <Card $h={59}>
                <CardTitle>Country (airports.csv)</CardTitle>
                <SideBody><LegendItems items={[["Belgium", "#b9cadc"]]} /></SideBody>
              </Card>
            </Side>
          </Work>
        </Right>
      </Body>

      <SheetBar>
        <SourceTab $w={163}><Ico w={10} h={12} sw="1.100"><rect x="1" y=".7" width="8" height="10.600" rx="2.500" /><path d="M1 3.500h8" /></Ico>Data Source</SourceTab>
        <SheetTab $w={69} $on>Sheet 1</SheetTab>
        {[2, 3, 4, 5, 6].map(n => <SheetTab key={n} $w={70}>Sheet {n}</SheetTab>)}
        <SheetTab $w={122}><Ico w={12} h={12} sw="1.100"><path d="M.6.600h10.800v10.800H.6zM6 .6v10.800M.6 6h10.800" /></Ico>Dashboard 1</SheetTab>
        <SheetTab $w={84}><Ico w={12} h={13} sw="1.100"><path d="M.6 1L6 3l5.400-2v9.500L6 12.400.6 10.500zM6 3v9.500" /></Ico>Story 1</SheetTab>
        <SheetTab $w={32} $plain aria-label="New worksheet"><Ico w={16} h={16} sw="1.100"><path d="M11 8V.6H.6v10.800H8M3.500 9V7M5.500 9V4M7.500 9V5.500" /><path d="M11.500 8.500v7M8 12h7" strokeWidth="2" /></Ico></SheetTab>
        <SheetTab $w={32} $plain aria-label="New dashboard"><Ico w={16} h={16} sw="1.100"><path d="M11.400 7.500V.6H.6v10.800H8M6 .6v10.800M.6 6h10.800" /><path d="M11.500 8.500v7M8 12h7" strokeWidth="2" /></Ico></SheetTab>
        <SheetTab $w={32} $plain aria-label="New story"><Ico w={16} h={16} sw="1.100"><path d="M11.400 7.500V1L6 3 .6 1v9.500L6 12.400M6 3v9.500" /><path d="M11.500 8.500v7M8 12h7" strokeWidth="2" /></Ico></SheetTab>
      </SheetBar>
      <Status>
        <span>48 marks</span><span>1 row by 1 column</span><span>SUM of AVG(Longitude): 221.070</span>
        <StatusRight>
          <Slot $w={157} $p="0 10px 0 6px"><UserBox>
            <Ico w={11} h={13} sw="1.100"><circle cx="5.500" cy="3.300" r="2.600" /><path d="M.8 12V9.500c0-1.500 1-2.300 2.500-2.300h4.400c1.500 0 2.500.8 2.500 2.300V12z" /></Ico>
            <select aria-label="User"><option>{"Keerthana\u00a0 P"}</option></select><Down w={8} h={5} c="#111" />
          </UserBox></Slot>
          <Slot $w={32} /><Slot $w={32} /><Slot $w={57} />
          <Slot $w={71} $p="0 8px 0 7px">
            {["M0 0h1v8H0zM7 0v8L2 4z", "M6 0v8L1 4z", "M1 0v8l5-4z", "M1 0v8l5-4zM7 0h1v8H7z"].map(d => <Ico key={d} w={8} s="none"><path d={d} fill="#b5b5b5" /></Ico>)}
          </Slot>
          <Slot $w={65} $p="0 0 0 8px">
            <Ico w={11} s="#b9b9b9" sw="3"><path strokeDasharray="3 1" d="M0 1.500h11M0 5.500h11M0 9.500h11" /></Ico>
            <Ico w={11} s="#b9b9b9" sw="3"><path d="M0 1.500h11M0 4.500h11" /><path strokeDasharray="3 1" d="M0 9.500h11" /></Ico>
            <svg width="11" height="11"><path d="M0 0h11v11H0z" fill="#666" /></svg>
          </Slot>
        </StatusRight>
      </Status>

      <Taskbar>
        <Start aria-label="Start"><svg width="20" height="20" viewBox="0 0 20 20"><path d="M0 2.800L8 1.700v7.800H0zM9 1.500L20 0v9.500H9zM0 10.500h8v7.800l-8-1.100zM9 10.500h11V20L9 18.500z" /></svg></Start>
        <TaskSearch><MagGlass size={21} c="#111" sw={0.9} /><input type="text" placeholder="Type here to search" aria-label="Search Windows" /><Octopus /></TaskSearch>
        <TaskView aria-label="Task view"><Ico w={20} h={20} s="#111" sw="1.400"><path d="M.7 0v3.300h12.600V0M.7 20v-3.300h12.600V20M.7 6h12.600v8H.7zM18.500 0v5M18.500 11.500V20" /><path d="M18.500 6v3.500" strokeWidth="3" /></Ico></TaskView>
        {apps.map(a => <TaskApp key={a.n} aria-label={a.n} $open={a.open} $on={a.on} $multi={a.multi}>{a.i}{a.badge && <Badge $s={21} $f={14} $x={37} $y={24}>1</Badge>}</TaskApp>)}
        <Tray>
          <Battery>
            <span>31%</span><i />
            <Ico w={12} h={20} s="#fff" sw="2"><path d="M3.500 0v6M8.500 0v6M6 12v7" /><path d="M1 6h10v4c0 2-2 4-5 4s-5-2-5-4z" fill="#fff" stroke="none" /></Ico>
          </Battery>
          <Weather>
            <svg width="30" height="28" viewBox="0 0 30 28"><path d="M19 0c7 3 10 9 9 15-1 8-7 13-14 13C7 28 2 24 1 18z" fill="#f59a23" /><path d="M7 4h21M2 8h20M10 12h18M0 16h16M18 19h10" stroke="#fcd779" strokeWidth="2.600" strokeLinecap="round" /></svg>
            26°C
          </Weather>
          <TrayCell aria-label="Show hidden icons"><Ico w={16} h={9} s="#111"><path d="M.7 8.300L8 1l7.300 7.300" /></Ico></TrayCell>
          <TrayCell aria-label="Power"><Ico w={20} h={14} s="#111" sw="1.200"><path d="M6 2.600h12.400v9.800H6M18.400 5.500h1.200v4h-1.200M1.500 0v3M4.500 0v3M.7 3h4.600v3L3 7.500.7 6zM3 7.500V14" /></Ico></TrayCell>
          <TrayCell aria-label="Meet now"><Ico w={16} h={18} s="#111" sw="1.200"><path d="M3 5.500h6.500v7.500H3zM9.500 8.500l4-2.500v6.500l-4-2.500M2.500 3C5 .3 10 .3 12.500 3M2.500 15.500c2.500 2.600 7.500 2.600 10 0" /></Ico></TrayCell>
          <TrayCell aria-label="Network"><Ico w={16} h={16} s="#222" sw="1.200"><path d="M1 15C1 7 7 1 15 1M5 15C5 9 9 5 15 5M9 15c0-3.500 2.500-6 6-6" /><circle cx="13.500" cy="13.500" r="1.500" fill="#222" /></Ico></TrayCell>
          <TrayCell aria-label="Volume muted"><Ico w={19} h={14} s="#111" sw="1.200"><path d="M1 4.500h2.500L8 1v12L3.500 9.500H1zM11.500 4l6 6M17.500 4l-6 6" /></Ico></TrayCell>
          <TrayCell $w={38} aria-label="Touch keyboard"><Ico w={30} h={17} s="#111" sw="1.200"><rect x=".7" y=".7" width="28.600" height="15.600" /><path strokeDasharray="1.500 1.500" d="M4 4.500h22M4 8h22" /><path d="M4 12h2M9 12h12M24 12h2" /></Ico></TrayCell>
          <TrayCell $w={46}>ENG<br />IN</TrayCell>
          <TrayCell $w={86}>1:47 AM<br />10/8/2023</TrayCell>
          <TrayCell $w={60} aria-label="Notifications">
            <svg width="20" height="22" viewBox="0 0 20 22"><path d="M0 0h20v17H8l-4 4v-4H0z" /><path d="M4 4.500h12M4 8.500h12M4 12.500h8" stroke="#fff" strokeWidth="1.300" /></svg>
            <Badge $s={22} $f={13} $x={23} $y={24}>12</Badge>
          </TrayCell>
          <DesktopEdge />
        </Tray>
      </Taskbar>
    </Window>
  );
}
